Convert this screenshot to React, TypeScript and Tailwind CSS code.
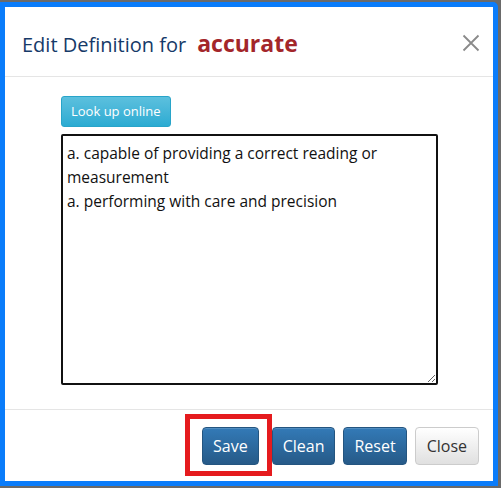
import React from "react";

const definition =
    "a. capable of providing a correct reading or measurement\na. performing with care and precision";

const PrimaryButton = ({ label }: { label: string }) => (
    <button
        type="button"
        className="h-[38px] px-[10px] rounded-[4px] border border-[#245580] bg-gradient-to-b from-[#337ab7] to-[#265a88] text-white text-[16px] leading-[24px] shadow-[inset_0_1px_0_rgba(255,255,255,0.15)]"
    >
        {label}
    </button>
);

export default function App() {
    return (
        <div
            className="w-[501px] h-[488px] bg-[#6a6a6a] pt-[2px] overflow-hidden"
            style={{ fontFamily: '"Open Sans", "Noto Sans", sans-serif' }}
        >
            <div className="w-[498px] h-[484px] border-[5px] border-[#0a7cfa] rounded-tr-[5px] bg-white flex flex-col">
                {/* Header */}
                <div className="h-[70px] flex items-center justify-between pl-[17px] pr-[13px] border-b border-[#e5e5e5] shrink-0">
                    <h4 className="flex items-baseline text-[#163a68] text-[20px] mt-[4px]">
                        Edit Definition for
                        <span className="ml-[11px] text-[#a3262a] text-[23px] font-bold">accurate</span>
                    </h4>
                    <button type="button" className="w-[18px] h-[18px] text-[#8a8a8a] mt-[2px]">
                        <svg viewBox="0 0 18 18" className="w-full h-full" fill="none" stroke="currentColor" strokeWidth="1.8">
                            <path d="M1.5 1.5 L16.5 16.5 M16.5 1.5 L1.5 16.5" />
                        </svg>
                    </button>
                </div>

                {/* Body */}
                <div className="flex-1 border-b border-[#e5e5e5] pl-[56px] pt-[19px]">
                    <button
                        type="button"
                        className="h-[31px] px-[9px] rounded-[3px] border border-[#28a4c9] bg-gradient-to-b from-[#5bc0de] to-[#2aabd2] text-white text-[13px] leading-[21px]"
                    >
                        Look up online
                    </button>
                    <textarea
                        readOnly
                        value={definition}
                        className="block mt-[7px] w-[377px] h-[251px] border-2 border-[#111] rounded-[2px] px-[4px] py-[5px] text-[15.5px] leading-[24px] text-[#111] outline-none resize"
                    />
                </div>

                {/* Footer */}
                <div className="h-[71px] shrink-0 flex items-center justify-end pr-[14px] pt-[1px]">
                    <span className="relative mr-[13px]">
                        <PrimaryButton label="Save" />
                        <span className="absolute -left-[17px] -top-[13px] -right-[13px] -bottom-[11px] border-[5px] border-[#e51b1e] pointer-events-none" />
                    </span>
                    <PrimaryButton label="Clean" />
                    <span className="ml-[8px]">
                        <PrimaryButton label="Reset" />
                    </span>
                    <button
                        type="button"
                        className="ml-[8px] h-[38px] px-[11px] rounded-[4px] border border-[#ccc] bg-gradient-to-b from-white to-[#e0e0e0] text-[#333] text-[16px] leading-[24px]"
                    >
                        Close
                    </button>
                </div>
            </div>
        </div>
    );
}
